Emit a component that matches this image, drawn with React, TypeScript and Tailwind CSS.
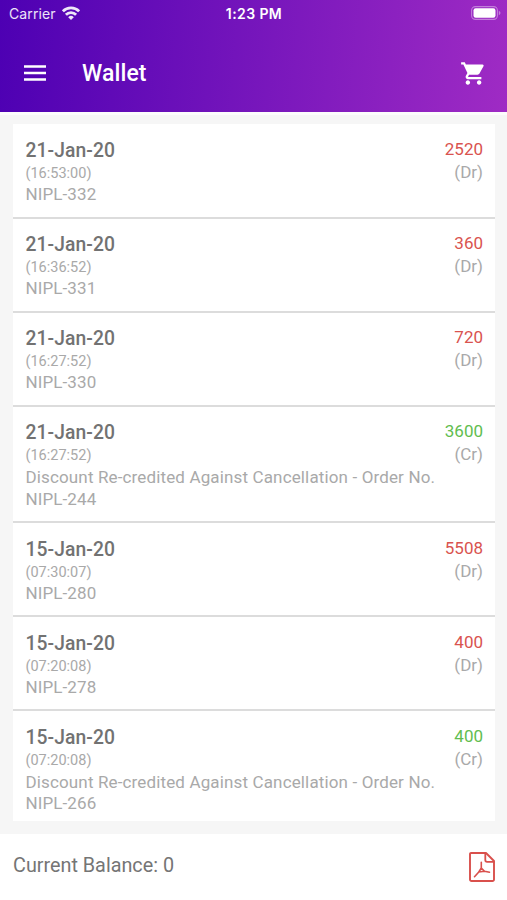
type Entry = {
  date: string;
  time: string;
  note?: string;
  order: string;
  amount: number;
  kind: 'Dr' | 'Cr';
};

const DISCOUNT = 'Discount Re-credited Against Cancellation - Order No.';

const ENTRIES: Entry[] = [
  { date: '21-Jan-20', time: '16:53:00', order: 'NIPL-332', amount: 2520, kind: 'Dr' },
  { date: '21-Jan-20', time: '16:36:52', order: 'NIPL-331', amount: 360, kind: 'Dr' },
  { date: '21-Jan-20', time: '16:27:52', order: 'NIPL-330', amount: 720, kind: 'Dr' },
  { date: '21-Jan-20', time: '16:27:52', note: DISCOUNT, order: 'NIPL-244', amount: 3600, kind: 'Cr' },
  { date: '15-Jan-20', time: '07:30:07', order: 'NIPL-280', amount: 5508, kind: 'Dr' },
  { date: '15-Jan-20', time: '07:20:08', order: 'NIPL-278', amount: 400, kind: 'Dr' },
  { date: '15-Jan-20', time: '07:20:08', note: DISCOUNT, order: 'NIPL-266', amount: 400, kind: 'Cr' },
];

function WifiIcon() {
  return (
    <svg viewBox="0 0 18 14" className="mb-[2px] h-[14px] w-[18px]" fill="none" stroke="currentColor" strokeWidth="2.8" aria-hidden>
      <path d="M.9 5.3a11.5 11.5 0 0 1 16.2 0" />
      <path d="M3.9 8.8a7.2 7.2 0 0 1 10.2 0" />
      <path d="M9 14 6.2 11.2a4 4 0 0 1 5.6 0z" fill="currentColor" stroke="none" />
    </svg>
  );
}

function BatteryIcon() {
  return (
    <svg viewBox="0 0 30 14" className="mb-px h-[14px] w-[30px]" aria-hidden>
      <rect x=".6" y=".6" width="25.8" height="12.8" rx="3.8" fill="none" stroke="#fff" strokeOpacity=".4" strokeWidth="1.1" />
      <rect x="2.5" y="2.3" width="22" height="9.4" rx="2.2" fill="#fff" />
      <path d="M27.8 4.8q1.7.7 1.7 2.2t-1.7 2.2z" fill="#fff" fillOpacity=".4" />
    </svg>
  );
}

function MenuIcon() {
  return (
    <svg viewBox="0 0 22 16" className="h-[16px] w-[22px]" fill="none" stroke="currentColor" strokeWidth="2.4" aria-hidden>
      <path d="M0 1.500h22M0 8h22M0 14.500h22" />
    </svg>
  );
}

function CartIcon() {
  return (
    <svg viewBox="0 0 24 24" className="size-[27px]" fill="currentColor" aria-hidden>
      <path d="M7 18c-1.1 0-1.99.9-1.99 2S5.9 22 7 22s2-.9 2-2-.9-2-2-2zM1 2v2h2l3.6 7.59-1.35 2.45c-.16.28-.25.61-.25.96 0 1.1.9 2 2 2h12v-2H7.42c-.14 0-.25-.11-.25-.25l.03-.12.9-1.63h7.45c.75 0 1.41-.41 1.75-1.03l3.58-6.49A1 1 0 0 0 20 4H5.21l-.94-2H1zm16 16c-1.1 0-1.99.9-1.99 2s.89 2 1.99 2 2-.9 2-2-.9-2-2-2z" />
    </svg>
  );
}

function PdfIcon() {
  return (
    <svg viewBox="0 0 26 30" className="h-[30px] w-[26px]" fill="none" stroke="currentColor" strokeLinejoin="round" strokeLinecap="round" aria-hidden>
      <path d="M2 1h15l8 8v18.5a1.5 1.5 0 0 1-1.5 1.5h-21A1.5 1.5 0 0 1 1 27.5V2a1 1 0 0 1 1-1z" strokeWidth="1.9" />
      <path d="M16.3 1.5V8a1.8 1.8 0 0 0 1.8 1.8h6.7" strokeWidth="1.8" />
      <path d="M12.3 10.3V16l-2.5 4-4.3 4.7M12.3 16l3.200 3.300 5 .9M9.800 20l5.700-.7" strokeWidth="1.600" />
    </svg>
  );
}

function Row({ entry }: { entry: Entry }) {
  return (
    <li className="flex justify-between border-b-2 border-[#dcdcdc] pr-3 pb-[11.1px] pl-[12.5px] last:border-b-0">
      <div className="pt-[14.500px] text-[#a9a9a9]">
        <p className="text-[19.3px] leading-[24px] font-medium tracking-[0.08px] text-[#727272]">{entry.date}</p>
        <p className="text-[14.5px] leading-[21px]">({entry.time})</p>
        {entry.note && <p className="text-[17px] leading-[22.3px] tracking-[0.14px] whitespace-nowrap">{entry.note}</p>}
        <p className="text-[17px] leading-[21.500px] tracking-[0.1px]">{entry.order}</p>
      </div>
      <div className="-ml-10 pt-[13.500px] text-right text-[17px] leading-[23px]">
        <p className={entry.kind === 'Cr' ? 'text-[#62bd50]' : 'text-[#d9534f]'}>{entry.amount}</p>
        <p className="text-[#a9a9a9]">({entry.kind})</p>
      </div>
    </li>
  );
}

export default function App() {
  return (
    <div className="flex h-[900px] w-[507px] flex-col overflow-hidden bg-[#f6f6f6] font-[Roboto,sans-serif]">
      <header className="flex h-[111.5px] shrink-0 flex-col bg-linear-[95deg] from-[#4d00b3] to-[#9f2bc4] text-white">
        <div className="grid h-[27px] grid-cols-3 items-center pr-[6px] pl-[9px] font-[Inter,sans-serif] text-[14px]">
          <div className="flex items-center gap-[6px] text-white/90">
            <span className="tracking-[0.1px]">Carrier</span>
            <WifiIcon />
          </div>
          <span className="-ml-[2px] text-center text-[14px] font-semibold tracking-[0.4px]">1:23 PM</span>
          <span className="justify-self-end">
            <BatteryIcon />
          </span>
        </div>
        <div className="flex flex-1 items-center pt-[8px] pr-[20px] pl-6">
          <button aria-label="Menu">
            <MenuIcon />
          </button>
          <h1 className="ml-9 flex-1 pt-[2px] text-[23px] leading-7 font-medium tracking-[0.1px]">Wallet</h1>
          <button aria-label="Cart">
            <CartIcon />
          </button>
        </div>
      </header>

      <main className="flex-1 border-t-[3px] border-[#fcfcfc] pt-[9.5px] pr-3 pl-[13px]">
        <ul className="h-[696.500px] overflow-hidden bg-white pt-[0.500px]">
          {ENTRIES.map((entry) => (
            <Row key={entry.order} entry={entry} />
          ))}
        </ul>
      </main>

      <footer className="flex h-[66px] shrink-0 items-center justify-between bg-white pr-3 pb-px pl-[13px]">
        <p className="pb-[2px] text-[19.8px] text-[#757575]">Current Balance: 0</p>
        <button aria-label="Download PDF" className="text-[#d9504c]">
          <PdfIcon />
        </button>
      </footer>
    </div>
  );
}
